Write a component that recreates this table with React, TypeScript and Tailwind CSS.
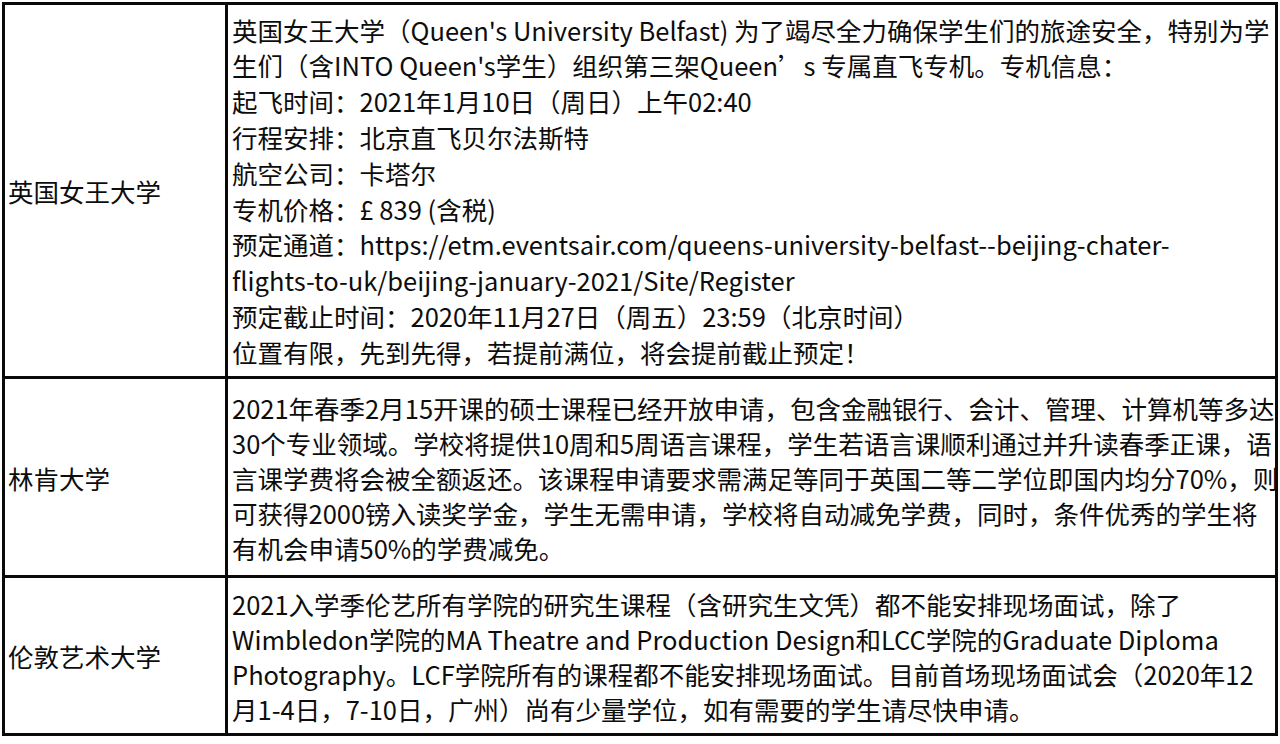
const rows = [
    {
        name: '英国女王大学',
        height: 'h-[371px]',
        leading: 'leading-[35.8px]',
        lines: [
            "英国女王大学（Queen's University Belfast) 为了竭尽全力确保学生们的旅途安全，特别为学",
            "生们（含INTO Queen's学生）组织第三架Queen’s 专属直飞专机。专机信息：",
            '起飞时间：2021年1月10日（周日）上午02:40',
            '行程安排：北京直飞贝尔法斯特',
            '航空公司：卡塔尔',
            '专机价格：£ 839 (含税)',
            '预定通道：https://etm.eventsair.com/queens-university-belfast--beijing-chater-',
            'flights-to-uk/beijing-january-2021/Site/Register',
            '预定截止时间：2020年11月27日（周五）23:59（北京时间）',
            '位置有限，先到先得，若提前满位，将会提前截止预定！',
        ],
    },
    {
        name: '林肯大学',
        height: 'h-[199px]',
        leading: 'leading-[35px]',
        lines: [
            '2021年春季2月15开课的硕士课程已经开放申请，包含金融银行、会计、管理、计算机等多达',
            '30个专业领域。学校将提供10周和5周语言课程，学生若语言课顺利通过并升读春季正课，语',
            '言课学费将会被全额返还。该课程申请要求需满足等同于英国二等二学位即国内均分70%，则',
            '可获得2000镑入读奖学金，学生无需申请，学校将自动减免学费，同时，条件优秀的学生将',
            '有机会申请50%的学费减免。',
        ],
    },
    {
        name: '伦敦艺术大学',
        height: 'h-[158px]',
        leading: 'leading-[35px]',
        lines: [
            '2021入学季伦艺所有学院的研究生课程（含研究生文凭）都不能安排现场面试，除了',
            'Wimbledon学院的MA Theatre and Production Design和LCC学院的Graduate Diploma',
            'Photography。LCF学院所有的课程都不能安排现场面试。目前首场现场面试会（2020年12',
            '月1-4日，7-10日，广州）尚有少量学位，如有需要的学生请尽快申请。',
        ],
    },
];

export default function App() {
    return (
        <div className="w-[1280px] h-[744px] bg-white pl-[2px] pt-[2px] font-['Noto_Sans_CJK_SC',sans-serif] text-[25.5px] leading-[35px] text-[#0d0d0d]">
            <div className="w-[1276px] border-[3px] border-[#0a0a0a]">
                {rows.map((row, i) => (
                    <div
                        key={row.name}
                        className={`${row.height} grid grid-cols-[223px_1fr] ${
                            i > 0 ? 'border-t-[3px] border-[#0a0a0a]' : ''
                        }`}
                    >
                        <div className="flex items-center border-r-[3px] border-[#0a0a0a] pl-[3px]">
                            {row.name}
                        </div>
                        <div className={`flex flex-col justify-center pl-[4px] ${row.leading}`}>
                            {row.lines.map((line, j) => (
                                <div key={j} className="whitespace-nowrap">
                                    {line}
                                </div>
                            ))}
                        </div>
                    </div>
                ))}
            </div>
        </div>
    );
}
